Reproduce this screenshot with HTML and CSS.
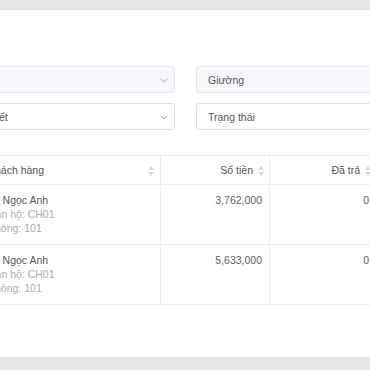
FILE: index.html
```html
<!DOCTYPE html>
<html lang="vi">
<head>
<meta charset="utf-8">
<link rel="stylesheet" href="styles.css">
</head>
<body>
<div class="page">
  <div class="card">
    <div class="filters">
      <div class="select disabled"><span class="val"></span><span class="chev"><svg width="8" height="5" viewBox="0 0 8 5"><path d="M0.5 0.8 L4 4 L7.5 0.8" fill="none" stroke="#a8abb2" stroke-width="1"/></svg></span></div>
      <div class="select disabled"><span class="val">Giường</span></div>
      <div class="select"><span class="val">Chi tiết</span><span class="chev"><svg width="8" height="5" viewBox="0 0 8 5"><path d="M0.5 0.8 L4 4 L7.5 0.8" fill="none" stroke="#a8abb2" stroke-width="1"/></svg></span></div>
      <div class="select"><span class="val">Trạng thái</span></div>
    </div>
    <table class="tbl">
      <colgroup><col class="c1"><col class="c2"><col class="c3"></colgroup>
      <thead>
        <tr>
          <th class="left"><span class="hd">Khách hàng</span><span class="sort sort-wide"><i class="up"></i><i class="down"></i></span></th>
          <th class="right"><span class="hd">Số tiền</span><span class="sort"><i class="up"></i><i class="down"></i></span></th>
          <th class="right"><span class="hd">Đã trả</span><span class="sort"><i class="up"></i><i class="down"></i></span></th>
        </tr>
      </thead>
      <tbody>
        <tr>
          <td class="left"><div class="name">Lê Ngọc Anh</div><div class="sub">Căn hộ: CH01</div><div class="sub">Phòng: 101</div></td>
          <td class="right">3,762,000</td>
          <td class="right">0</td>
        </tr>
        <tr>
          <td class="left"><div class="name">Lê Ngọc Anh</div><div class="sub">Căn hộ: CH01</div><div class="sub">Phòng: 101</div></td>
          <td class="right">5,633,000</td>
          <td class="right">0</td>
        </tr>
      </tbody>
    </table>
  </div>
</div>
</body>
</html>
```

FILE: styles.css
```css
html, body {
  margin: 0;
  padding: 0;
}
body {
  background: #e6e6e6;
  font-family: "Liberation Sans", Arial, sans-serif;
  font-size: 10.5px;
  color: #606266;
  overflow: hidden;
  width: 370px;
  height: 370px;
}
.page {
  padding-top: 10px;
}
.card {
  background: #ffffff;
  height: 347px;
  padding-top: 56px;
  box-sizing: border-box;
  overflow: hidden;
}
.filters {
  display: grid;
  grid-template-columns: 212px 212px;
  column-gap: 21px;
  row-gap: 10px;
  margin-left: -37px;
}
.select {
  height: 27px;
  box-sizing: border-box;
  border: 1px solid #dcdfe6;
  border-radius: 3px;
  background: #ffffff;
  display: flex;
  align-items: center;
  justify-content: space-between;
  padding: 0 6px 0 11px;
  color: #555;
}
.select.disabled {
  background: #f5f7fa;
  border-color: #e4e7ed;
}
.chev {
  display: flex;
  width: 8px;
  height: 5px;
  margin-top: 1px;
}
.tbl {
  margin-top: 25px;
  margin-left: -23px;
  border-collapse: collapse;
  table-layout: fixed;
  width: 399px;
}
.c1 { width: 183px; }
.c2 { width: 109px; }
.c3 { width: 107px; }
.tbl th, .tbl td {
  border: 1px solid #ebeef5;
  vertical-align: top;
}
.tbl th {
  font-weight: normal;
  color: #555;
  height: 29px;
  padding: 0 4px 0 10px;
  box-sizing: border-box;
  vertical-align: middle;
  line-height: 14px;
}
.tbl th.left { text-align: left; position: relative; }
.tbl th.right { text-align: right; }
.hd {
  vertical-align: middle;
}
.sort {
  display: inline-block;
  vertical-align: middle;
  width: 8px;
  height: 10px;
  margin-left: 4px;
  position: relative;
}
.sort-wide {
  position: absolute;
  right: 5px;
  top: 10px;
}
.sort .up, .sort .down {
  position: absolute;
  left: 1px;
  width: 0;
  height: 0;
  border-left: 3px solid transparent;
  border-right: 3px solid transparent;
}
.sort .up {
  top: 0;
  border-bottom: 4px solid #d6d8dd;
}
.sort .down {
  bottom: 0;
  border-top: 4px solid #d6d8dd;
}
.tbl td {
  padding: 8px 7px 9px 10px;
  line-height: 14px;
  height: 59px;
  box-sizing: border-box;
}
.tbl td.right { text-align: right; }
.name { color: #555; }
.sub { color: #a8abb2; }
```
